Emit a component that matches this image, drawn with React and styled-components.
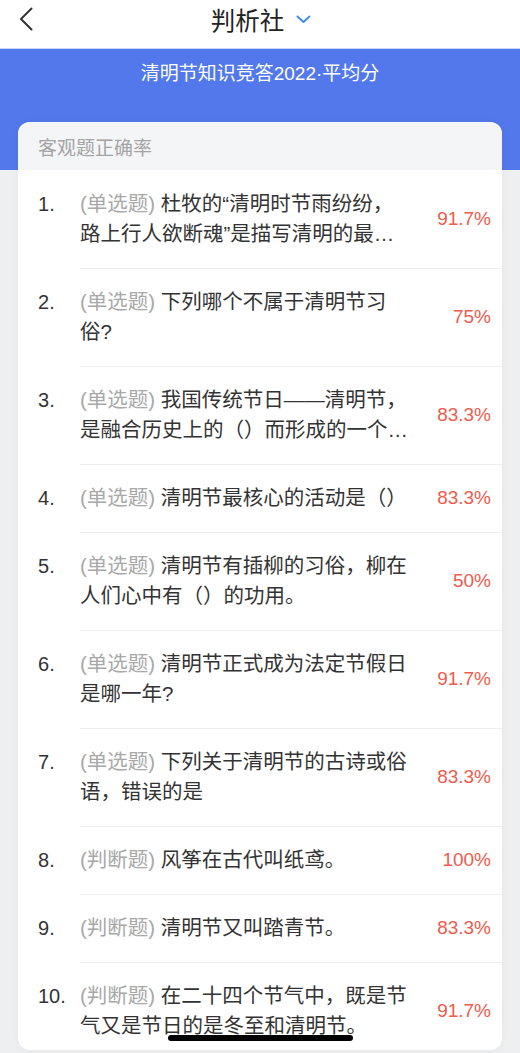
import React from "react";
import styled, { createGlobalStyle } from "styled-components";

const questions = [
  { type: "单选题", text: "杜牧的“清明时节雨纷纷，路上行人欲断魂”是描写清明的最著名的诗句，请问这首诗的名字是", rate: "91.7%" },
  { type: "单选题", text: "下列哪个不属于清明节习俗?", rate: "75%" },
  { type: "单选题", text: "我国传统节日——清明节，是融合历史上的（）而形成的一个节日", rate: "83.3%" },
  { type: "单选题", text: "清明节最核心的活动是（）", rate: "83.3%" },
  { type: "单选题", text: "清明节有插柳的习俗，柳在人们心中有（）的功用。", rate: "50%" },
  { type: "单选题", text: "清明节正式成为法定节假日是哪一年?", rate: "91.7%" },
  { type: "单选题", text: "下列关于清明节的古诗或俗语，错误的是", rate: "83.3%" },
  { type: "判断题", text: "风筝在古代叫纸鸢。", rate: "100%" },
  { type: "判断题", text: "清明节又叫踏青节。", rate: "83.3%" },
  { type: "判断题", text: "在二十四个节气中，既是节气又是节日的是冬至和清明节。", rate: "91.7%" },
];

const GlobalStyle = createGlobalStyle`
  body {
    margin: 0;
    background: #eeeff1;
    font-family: "Liberation Sans", "Noto Sans CJK SC", sans-serif;
    color: #333;
  }
`;

const Page = styled.div`
  min-height: 1053px;
  overflow: hidden;
`;

const NavBar = styled.div`
  height: 49px;
  background: #fff;
  display: grid;
  grid-template-columns: 60px 1fr 60px;
  align-items: center;
  border-bottom: 1px solid #c9d3f7;
  box-sizing: border-box;
`;

const BackBtn = styled.div`
  padding-left: 19px;
  display: flex;
  align-items: center;
  height: 100%;
  padding-bottom: 10px;
  box-sizing: border-box;
`;

const Title = styled.div`
  display: flex;
  align-items: center;
  justify-content: center;
  gap: 12px;
  font-size: 24.5px;
  color: #222;
  padding-bottom: 10px;
  padding-left: 2px;
`;

const Band = styled.div`
  height: 121px;
  background: #5378ec;
  color: #fff;
  text-align: center;
  font-size: 19px;
  line-height: 28px;
  padding-top: 11px;
  box-sizing: border-box;
`;

const Card = styled.div`
  margin: -48px 18px 3px;
  background: #fff;
  border-radius: 12px;
  overflow: hidden;
  position: relative;
  box-shadow: 0 0 10px rgba(0, 0, 0, 0.05);
`;

const CardHead = styled.div`
  height: 48px;
  background: #f4f5f7;
  display: flex;
  align-items: center;
  padding-left: 20px;
  font-size: 19px;
  color: #a4a4a4;
`;

const Row = styled.div`
  display: flex;
  padding-left: 20px;
`;

const Num = styled.div`
  width: 42px;
  flex-shrink: 0;
  font-size: 20px;
  line-height: 30px;
  padding-top: 19px;
  color: #333;
`;

const Body = styled.div`
  flex: 1;
  display: flex;
  align-items: center;
  padding: 19px 11px ${(p) => (p.$last ? "9px" : "19px")} 0;
  border-bottom: ${(p) => (p.$last ? "none" : "1px solid #efefef")};
  margin-bottom: ${(p) => (p.$last ? "0" : "-1px")};
`;

const Text = styled.div`
  width: 333px;
  flex-shrink: 0;
  font-size: 20.5px;
  line-height: 30px;
  color: #333;
  display: -webkit-box;
  -webkit-line-clamp: 2;
  -webkit-box-orient: vertical;
  overflow: hidden;
`;

const Tag = styled.span`
  color: #a8a8a8;
`;

const Rate = styled.div`
  flex: 1;
  text-align: right;
  font-size: 19px;
  color: #ef5b4d;
`;

const HomeBar = styled.div`
  position: fixed;
  left: 168px;
  top: 1035px;
  width: 185px;
  height: 6px;
  border-radius: 3px;
  background: #000;
`;

export default function App() {
  return (
    <Page>
      <GlobalStyle />
      <NavBar>
        <BackBtn>
          <svg width="14" height="24" viewBox="0 0 14 24">
            <path d="M12.5 1.5 L2 12 L12.5 22.5" fill="none" stroke="#333" strokeWidth="2" strokeLinecap="round" strokeLinejoin="round" />
          </svg>
        </BackBtn>
        <Title>
          判析社
          <svg width="15" height="9" viewBox="0 0 15 9">
            <path d="M1.5 1.5 L7.5 7 L13.5 1.5" fill="none" stroke="#3f8ef2" strokeWidth="2" strokeLinecap="round" strokeLinejoin="round" />
          </svg>
        </Title>
        <div />
      </NavBar>
      <Band>清明节知识竞答2022·平均分</Band>
      <Card>
        <CardHead>客观题正确率</CardHead>
        {questions.map((q, i) => (
          <Row key={i}>
            <Num>{i + 1}.</Num>
            <Body $last={i === questions.length - 1}>
              <Text>
                <Tag>({q.type})</Tag> {q.text}
              </Text>
              <Rate>{q.rate}</Rate>
            </Body>
          </Row>
        ))}
      </Card>
      <HomeBar />
    </Page>
  );
}
